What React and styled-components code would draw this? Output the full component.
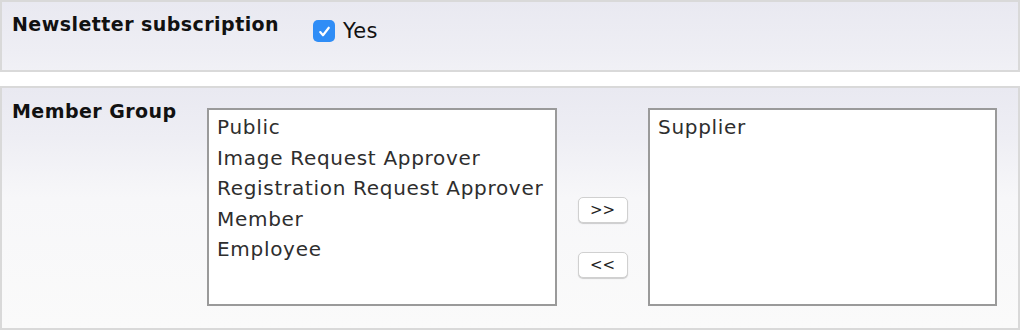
import React, { useState } from 'react';
import styled, { createGlobalStyle } from 'styled-components';

const GlobalStyle = createGlobalStyle`
  body {
    margin: 0;
    background: #fff;
    font-family: "DejaVu Sans", Tahoma, sans-serif;
  }
`;

const Page = styled.div`
  width: 1020px;
  height: 330px;
  display: flex;
  flex-direction: column;
  gap: 14px;
`;

const Section = styled.div`
  box-sizing: border-box;
  height: ${(props) => props.height}px;
  border: 2px solid #d9d9d9;
  background: linear-gradient(to bottom, #e9e9f1 0px, #eeeef4 50px, #f7f7f9 110px, #fafafa 100%);
  display: flex;
  padding: 8px 10px;
`;

const Label = styled.div`
  width: ${(props) => props.width}px;
  flex-shrink: 0;
  font-weight: bold;
  font-size: 19px;
  letter-spacing: 0.45px;
  color: #111;
  line-height: 24px;
  padding-top: ${(props) => props.offset}px;
`;

const CheckLabel = styled.label`
  display: flex;
  align-items: center;
  gap: 8px;
  font-size: 21px;
  letter-spacing: 0.3px;
  color: #111;
  margin-top: 9px;
  height: 24px;
`;

const CheckBox = styled.span`
  width: 22px;
  height: 22px;
  border-radius: 5px;
  background: #2f8df6;
  display: flex;
  align-items: center;
  justify-content: center;
`;

const ListBox = styled.div`
  box-sizing: border-box;
  width: ${(props) => props.width}px;
  height: 198px;
  margin-top: 12px;
  border: 2px solid #9a9a9a;
  background: #fff;
  padding: 2px 8px;
  flex-shrink: 0;
`;

const Option = styled.div`
  font-size: 20px;
  letter-spacing: 0.7px;
  line-height: 30.5px;
  color: #2e2e2e;
  white-space: nowrap;
  cursor: default;
`;

const Arrows = styled.div`
  width: 91px;
  flex-shrink: 0;
  display: flex;
  flex-direction: column;
  align-items: center;
  gap: 29px;
  padding-top: 101px;
`;

const ArrowButton = styled.button`
  box-sizing: border-box;
  width: 50px;
  height: 26px;
  background: #fff;
  border: 1px solid #d0d0d0;
  border-radius: 5px;
  box-shadow: 0 1px 1px rgba(0, 0, 0, 0.18);
  font-family: "DejaVu Sans", sans-serif;
  font-size: 15px;
  color: #222;
  padding: 0;
  cursor: pointer;
`;

const App = () => {
  const [available, setAvailable] = useState([
    'Public',
    'Image Request Approver',
    'Registration Request Approver',
    'Member',
    'Employee',
  ]);
  const [chosen, setChosen] = useState(['Supplier']);

  return (
    <>
      <GlobalStyle />
      <Page>
        <Section height={72}>
          <Label width={301} offset={2}>Newsletter subscription</Label>
          <CheckLabel>
            <CheckBox>
              <svg width="15" height="15" viewBox="0 0 14 14">
                <path d="M3 7.5l2.6 3L11 3.5" fill="none" stroke="#fff" strokeWidth="2" strokeLinecap="round" strokeLinejoin="round" />
              </svg>
            </CheckBox>
            Yes
          </CheckLabel>
        </Section>
        <Section height={244}>
          <Label width={195} offset={3}>Member Group</Label>
          <ListBox width={350}>
            {available.map((item) => (
              <Option key={item}>{item}</Option>
            ))}
          </ListBox>
          <Arrows>
            <ArrowButton onClick={() => { if (available.length) { setChosen([...chosen, available[0]]); setAvailable(available.slice(1)); } }}>&gt;&gt;</ArrowButton>
            <ArrowButton onClick={() => { if (chosen.length) { setAvailable([...available, chosen[chosen.length - 1]]); setChosen(chosen.slice(0, -1)); } }}>&lt;&lt;</ArrowButton>
          </Arrows>
          <ListBox width={349}>
            {chosen.map((item) => (
              <Option key={item}>{item}</Option>
            ))}
          </ListBox>
        </Section>
      </Page>
    </>
  );
};

export default App;
